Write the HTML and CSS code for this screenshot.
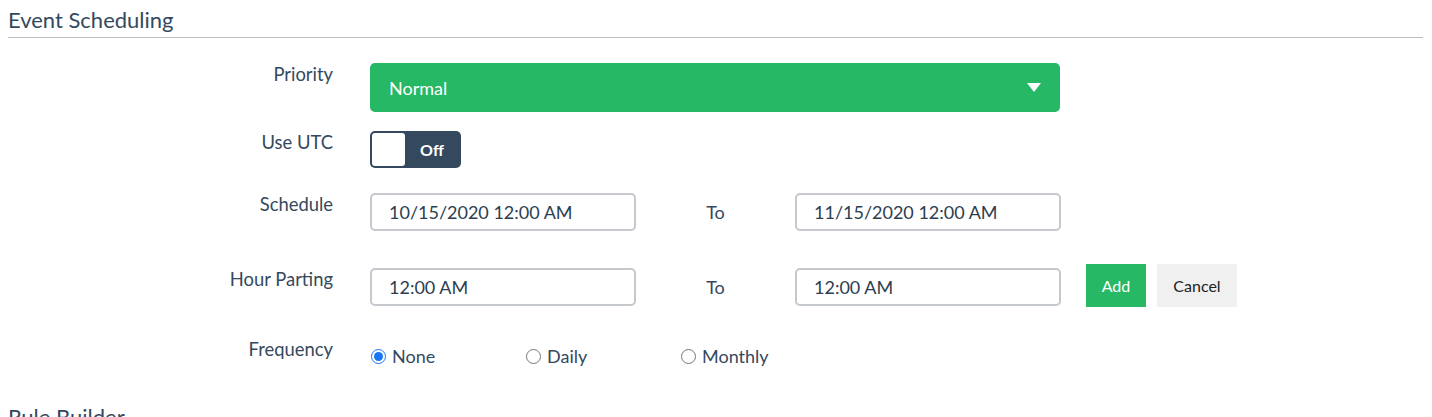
FILE: index.html
```html
<!DOCTYPE html>
<html>
<head>
<meta charset="utf-8">
<link rel="stylesheet" href="styles.css">
</head>
<body>
<h2 class="section-title">Event Scheduling</h2>
<div class="form">
  <div class="row row-priority">
    <div class="label">Priority</div>
    <div class="control">
      <div class="select">
        <span>Normal</span>
        <svg class="caret" width="14" height="9" viewBox="0 0 14 9"><path d="M0 0H14L7 9Z" fill="#fff"/></svg>
      </div>
    </div>
  </div>
  <div class="row row-utc">
    <div class="label">Use UTC</div>
    <div class="control">
      <div class="toggle"><span class="knob"></span><span class="toggle-text">Off</span></div>
    </div>
  </div>
  <div class="row row-schedule">
    <div class="label">Schedule</div>
    <div class="control">
      <div class="input">10/15/2020 12:00 AM</div>
      <div class="to">To</div>
      <div class="input">11/15/2020 12:00 AM</div>
    </div>
  </div>
  <div class="row row-hour">
    <div class="label">Hour Parting</div>
    <div class="control">
      <div class="input">12:00 AM</div>
      <div class="to">To</div>
      <div class="input">12:00 AM</div>
      <button class="btn btn-add">Add</button>
      <button class="btn btn-cancel">Cancel</button>
    </div>
  </div>
  <div class="row row-freq">
    <div class="label">Frequency</div>
    <div class="control radios">
      <label class="radio"><input type="radio" name="f" checked><span>None</span></label>
      <label class="radio"><input type="radio" name="f"><span>Daily</span></label>
      <label class="radio"><input type="radio" name="f"><span>Monthly</span></label>
    </div>
  </div>
</div>
<h2 class="section-title">Rule Builder</h2>
</body>
</html>
```
FILE: styles.css
```css
html, body {
  margin: 0;
  padding: 0;
  background: #fff;
}
body {
  padding: 0 9px 0 8px;
  font-family: Lato, "Open Sans", sans-serif;
  color: #34495e;
  overflow: hidden;
  height: 417px;
}
.section-title {
  margin: 0;
  font-size: 22px;
  font-weight: 400;
  line-height: 28px;
  padding-top: 6px;
  padding-bottom: 3px;
  border-bottom: 1px solid #bdbdbd;
  color: #34495e;
}
.form {
  padding-top: 25px;
}
.row {
  display: flex;
  align-items: flex-start;
}
.label {
  width: 325px;
  flex: none;
  text-align: right;
  font-size: 18.4px;
  line-height: 22px;
  color: #34495e;
}
.control {
  margin-left: 37px;
  display: flex;
  align-items: flex-start;
}
.row-priority { margin-bottom: 19px; }
.row-utc { margin-bottom: 25px; }
.row-schedule { margin-bottom: 33px; }
.row-hour { margin-bottom: 31px; }
.row-hour .label { padding-top: 4px; }
.row-hour .input { margin-top: 4px; }
.row-hour .to { margin-top: 4px; }
.row-freq { margin-bottom: 30px; }

.select {
  width: 690px;
  height: 49px;
  box-sizing: border-box;
  background: #26b864;
  border-radius: 5px;
  display: flex;
  align-items: center;
  justify-content: space-between;
  padding: 0 19px 0 19px;
  color: #fff;
  font-size: 18px;
}
.caret { display: block; }

.toggle {
  width: 91px;
  height: 37px;
  box-sizing: border-box;
  background: #34495e;
  border-radius: 5px;
  padding: 2px;
  display: flex;
  align-items: stretch;
}
.knob {
  width: 33px;
  background: #fff;
  border-radius: 3px;
}
.toggle-text {
  flex: 1;
  display: flex;
  align-items: center;
  justify-content: center;
  color: #fff;
  font-weight: 700;
  font-size: 16px;
}

.input {
  width: 266px;
  height: 38px;
  box-sizing: border-box;
  border: 2px solid #c5c8cc;
  border-radius: 5px;
  padding: 0 17px;
  display: flex;
  align-items: center;
  font-size: 18px;
  color: #2c3e50;
}
.to {
  width: 159px;
  height: 38px;
  display: flex;
  align-items: center;
  justify-content: center;
  font-size: 18px;
  color: #34495e;
}
.btn {
  height: 43px;
  border: none;
  border-radius: 0;
  font-family: Lato, "Open Sans", sans-serif;
  font-size: 16px;
  padding: 0;
  cursor: pointer;
}
.btn-add {
  margin-left: 25px;
  width: 60px;
  background: #26b864;
  color: #fff;
}
.btn-cancel {
  margin-left: 11px;
  width: 80px;
  background: #f0f0f0;
  color: #222;
}

.radios {
  padding-top: 7px;
}
.radio {
  width: 155px;
  display: flex;
  align-items: center;
  font-size: 18px;
  line-height: 22px;
  color: #34495e;
}
.radio input {
  width: 15px;
  height: 15px;
  margin: 0 6px 0 1px;
  accent-color: #1877f2;
}
```
